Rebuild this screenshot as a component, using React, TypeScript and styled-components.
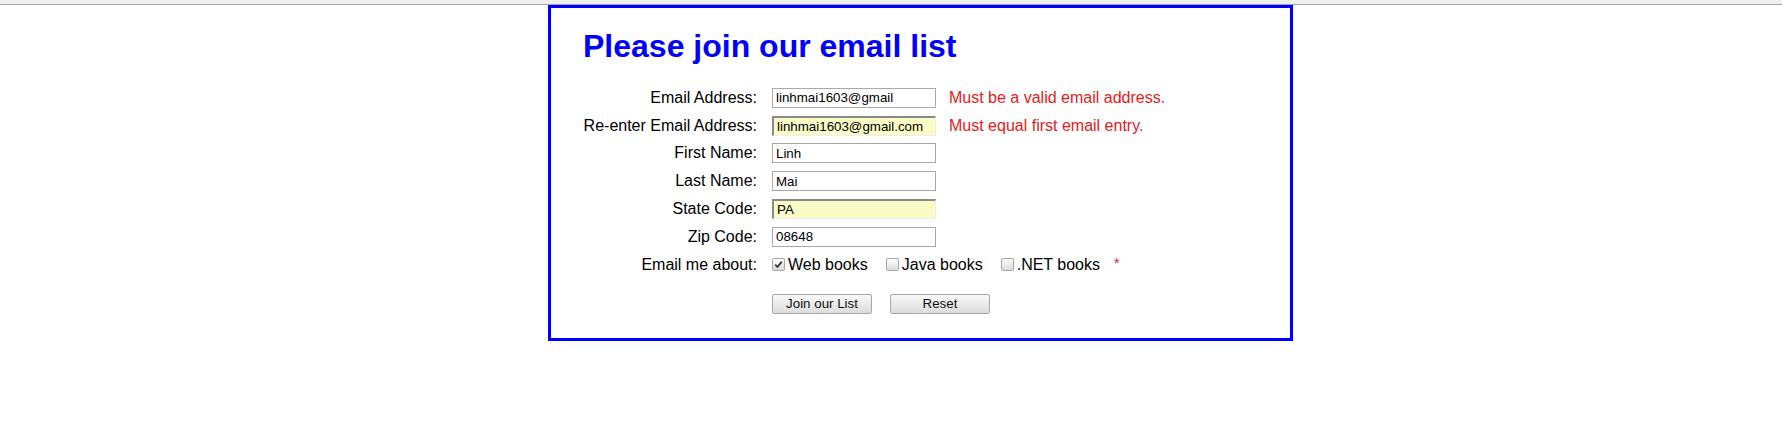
import React from "react";
import styled, { createGlobalStyle } from "styled-components";

const GlobalStyle = createGlobalStyle`
  html, body { margin: 0; padding: 0; background: #ffffff; }
  body { font-family: "Liberation Sans", Arial, sans-serif; font-size: 16px; color: #000; }
`;

const TopStrip = styled.div`
  height: 4px;
  background: #f0f0f0;
  border-bottom: 1px solid #a3a3a3;
`;

const Panel = styled.main`
  box-sizing: border-box;
  width: 745px;
  height: 336px;
  margin-left: 548px;
  border: 3px solid #0000ff;
  padding: 20px 32px 0 32px;
`;

const Title = styled.h1`
  margin: 0 0 19px 0;
  font-size: 32px;
  font-weight: bold;
  color: #0000ff;
  line-height: 37px;
`;

const FormGrid = styled.form`
  display: grid;
  grid-template-columns: 174px 164px auto;
  grid-template-rows: repeat(7, 27.8px) 35.4px;
  column-gap: 15px;
  align-items: center;
`;

const Label = styled.label`
  text-align: right;
  white-space: nowrap;
  line-height: 18px;
`;

const TextInput = styled.input<{ $filled?: boolean }>`
  box-sizing: border-box;
  width: 164px;
  height: 20px;
  margin: 0;
  padding: 1px 3px;
  font-family: "Liberation Sans", Arial, sans-serif;
  font-size: 13.33px;
  color: #000;
  outline: none;
  background: ${(p) => (p.$filled ? "#fafcc6" : "#ffffff")};
  border-style: solid;
  border-color: ${(p) =>
    p.$filled ? "#8a8a8a #eeeeee #eeeeee #8a8a8a" : "#a9a9a9"};
  border-width: ${(p) => (p.$filled ? "2px 1px 1px 2px" : "1px")};
`;

const ErrorText = styled.span`
  color: #e81a1a;
  margin-left: -2px;
  white-space: nowrap;
`;

const CheckRow = styled.div`
  grid-column: 2 / 4;
  display: flex;
  align-items: center;
  white-space: nowrap;
`;

const CheckItem = styled.span`
  display: inline-flex;
  align-items: center;
  margin-right: 18px;
`;

const Box = styled.span`
  box-sizing: border-box;
  width: 13px;
  height: 13px;
  margin-right: 3px;
  border: 1px solid #a8a8a8;
  border-radius: 2px;
  background: linear-gradient(#fcfcfc, #dcdcdc);
  display: inline-flex;
  align-items: center;
  justify-content: center;
`;

const Required = styled.span`
  color: #e81a1a;
  font-size: 14px;
  margin-left: -4px;
  position: relative;
  top: -2px;
`;

const ButtonRow = styled.div`
  grid-column: 2 / 4;
  display: flex;
  gap: 18px;
  align-self: end;
`;

const Button = styled.button`
  box-sizing: border-box;
  width: 100px;
  height: 20px;
  padding: 0;
  font-family: "Liberation Sans", Arial, sans-serif;
  font-size: 13.33px;
  color: #111;
  border: 1px solid #a6a6a6;
  border-radius: 2px;
  background: linear-gradient(#f8f8f8, #dddddd);
`;

const Check = ({ checked, label }: { checked?: boolean; label: string }) => (
  <CheckItem>
    <Box>
      {checked && (
        <svg width="9" height="9" viewBox="0 0 9 9">
          <path d="M1.2 4.6 L3.5 7 L7.8 1.6" fill="none" stroke="#333" strokeWidth="1.8" />
        </svg>
      )}
    </Box>
    {label}
  </CheckItem>
);

const Spacer = styled.span``;

export default function App() {
  return (
    <>
      <GlobalStyle />
      <TopStrip />
      <Panel>
        <Title>Please join our email list</Title>
        <FormGrid onSubmit={(e) => e.preventDefault()}>
          <Label>Email Address:</Label>
          <TextInput defaultValue="linhmai1603@gmail" />
          <ErrorText>Must be a valid email address.</ErrorText>

          <Label>Re-enter Email Address:</Label>
          <TextInput $filled defaultValue="linhmai1603@gmail.com" />
          <ErrorText>Must equal first email entry.</ErrorText>

          <Label>First Name:</Label>
          <TextInput defaultValue="Linh" />
          <Spacer />

          <Label>Last Name:</Label>
          <TextInput defaultValue="Mai" />
          <Spacer />

          <Label>State Code:</Label>
          <TextInput $filled defaultValue="PA" />
          <Spacer />

          <Label>Zip Code:</Label>
          <TextInput defaultValue="08648" />
          <Spacer />

          <Label>Email me about:</Label>
          <CheckRow>
            <Check checked label="Web books" />
            <Check label="Java books" />
            <Check label=".NET books" />
            <Required>*</Required>
          </CheckRow>

          <Spacer />
          <ButtonRow>
            <Button type="submit">Join our List</Button>
            <Button type="reset">Reset</Button>
          </ButtonRow>
        </FormGrid>
      </Panel>
    </>
  );
}
